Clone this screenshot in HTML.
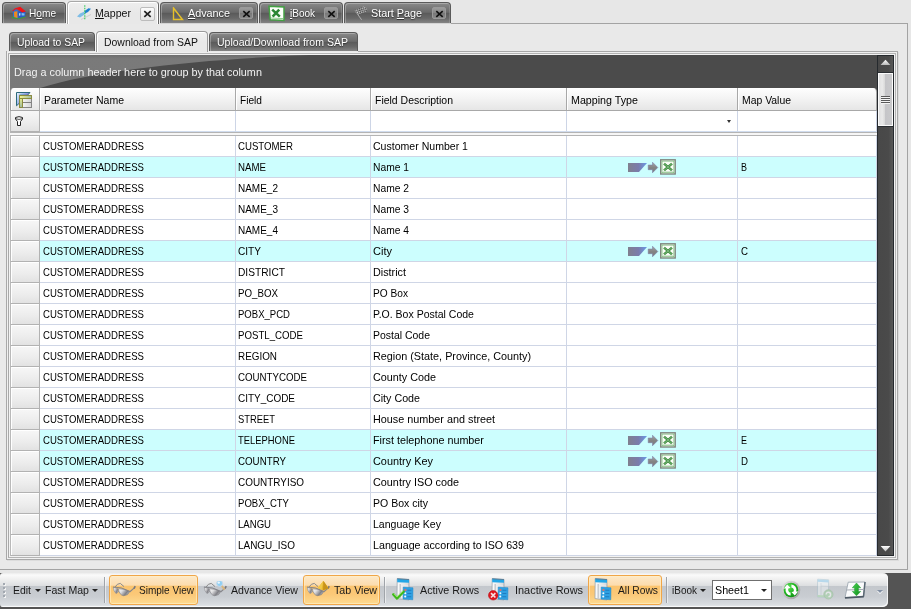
<!DOCTYPE html>
<html>
<head>
<meta charset="utf-8">
<title>Mapper</title>
<style>
*{box-sizing:border-box;margin:0;padding:0}
html,body{width:911px;height:609px;overflow:hidden}
body{background:#e7e7e7;font-family:"Liberation Sans",sans-serif;font-size:11px;color:#000;position:relative}
.abs{position:absolute}
.t{position:absolute;white-space:nowrap;line-height:13px;height:13px;transform-origin:0 50%}
/* ---------- top tabs ---------- */
.tab{position:absolute;top:2px;height:21px;border:1px solid #5a5a5a;border-bottom:none;border-radius:4px 4px 0 0;
 background:linear-gradient(#8a8a8a 0,#7a7a7a 22%,#6b6b6b 46%,#5b5b5b 52%,#686868 76%,#848484 100%);
 box-shadow:inset 1px 1px 0 rgba(255,255,255,.28), inset -1px 0 0 rgba(255,255,255,.15), 0 1px 0 #d4d4d4}
.tab.act{top:1px;height:23px;background:linear-gradient(#eeeeee,#e8e8e8 50%);border-color:#a8a8a8;border-right-color:#666;box-shadow:inset 1px 1px 0 #fff,inset -1px 0 0 #fff,-1px 0 0 #f8f8f8,1px 0 0 #f0f0f0}
.tab .t{color:#fff;text-shadow:0 1px 1px #333}
.tab.act .t{color:#111;text-shadow:none}
.cls{position:absolute;top:4px;width:14px;height:12px;border:1px solid #9a9a9a;border-radius:2px;
 background:linear-gradient(#9c9c9c,#858585 50%,#787878 55%,#8a8a8a)}
.tab.act .cls{background:linear-gradient(#fbfbfb,#e4e4e4);border-color:#bcbcbc;top:5px;box-shadow:none;width:15px;height:14px}
.cls svg{position:absolute;left:2px;top:2px}
/* second-level tabs */
.tab2{position:absolute;top:32px;height:19px;border:1px solid #5a5a5a;border-bottom:none;border-radius:4px 4px 0 0;
 background:linear-gradient(#8a8a8a 0,#7a7a7a 22%,#6b6b6b 46%,#5b5b5b 52%,#686868 76%,#848484 100%);
 box-shadow:inset 1px 1px 0 rgba(255,255,255,.28)}
.tab2 .t{color:#fff;text-shadow:0 1px 1px #333}
.tab2.act{top:31px;height:21px;background:linear-gradient(#f0f0f0,#e9e9e9 50%);border-color:#9a9a9a;box-shadow:inset 1px 1px 0 #fff,-1px 0 0 #f8f8f8,1px 0 0 #f0f0f0}
.tab2.act .t{color:#111;text-shadow:none}
/* ---------- frames ---------- */
#outer{position:absolute;left:-1px;top:23px;width:909px;height:547px;border:1px solid #a3a3a3;background:#e9e9e9}
#inner{position:absolute;left:6px;top:51px;width:892px;height:509px;border:1px solid #a8a8a8;background:#f0f0f0;box-shadow:1px 1px 0 #dcdcdc}
#inner2{position:absolute;left:8px;top:53px;width:888px;height:505px;border:1px solid #b4b4b4;background:#f2f2f2;border-left-color:#a8a8a8}
/* ---------- grid ---------- */
#grp{position:absolute;left:10px;top:55px;width:867px;height:33px;background:#4b4b4b;overflow:hidden}
#grid{position:absolute;left:10px;top:88px;width:867px;height:468px;background:#fff;overflow:hidden}
.hdr{position:absolute;top:0;height:23px;background:linear-gradient(#fefefe,#f4f4f4 45%,#e6e6e6);border-right:1px solid #a8a8a8;border-bottom:1px solid #a8a8a8;box-shadow:inset 1px 1px 0 #fff}
.flt{position:absolute;top:23px;height:21px;background:#fff;border-right:1px solid #cdd5e6;border-bottom:1px solid #d0dcee}
.ind{position:absolute;left:0;width:30px;height:21px;background:linear-gradient(#f7f7f7,#ececec 60%,#e2e2e2);border:1px solid #b2b2b2;border-top:none;border-left-color:#b9b9b9}
.row{position:absolute;left:30px;width:837px;height:21px;border-bottom:1px solid #cfd6e6;background:#fff}
.row.hl{background:#ccfefe}
.vl{position:absolute;top:48px;bottom:0;width:1px;background:#cfd6e6}
.c{position:absolute;top:4px;white-space:nowrap;line-height:13px;transform-origin:0 50%}
/* scrollbar */
#sb{position:absolute;left:877px;top:55px;width:17px;height:501px;background:linear-gradient(90deg,#484848 0,#4a4a4a 70%,#585858 100%);border:1px solid #262a2e}
#thumb{position:absolute;left:0;top:17px;width:15px;height:53px;border:1px solid #fbfbfb;
 background:linear-gradient(90deg,#e0e0e0 0,#e9e9e9 25%,#dadada 44%,#c5c5c8 48%,#c9c9cb 100%);box-shadow:0 -1px 0 #2a2e32,0 1px 0 #2a2e32}
/* ---------- toolbar ---------- */
#tbbg{position:absolute;left:0;top:573px;width:911px;height:36px;background:#545454}
#tb{position:absolute;left:0;top:573px;width:888px;height:34px;border-radius:3px 5px 5px 3px;box-shadow:inset -1px -1px 0 rgba(255,255,255,.75);
 background:linear-gradient(#ececec 0,#fafafa 6%,#f0f0f0 18%,#dddfe1 37%,#c3c7cc 39%,#c9cdd2 70%,#d8dce0 92%,#e6e9ec 100%)}
.btn{position:absolute;top:575px;height:30px;border:1px solid #f0a648;border-radius:3px;
 background:linear-gradient(#fde9c8 0,#fcdcae 33%,#fbc46e 36%,#fbc878 65%,#fdda90 100%);box-shadow:inset 0 0 0 1px rgba(255,240,200,.6)}
.sep{position:absolute;top:577px;width:1px;height:26px;background:#a0a4a9;box-shadow:1px 0 0 rgba(255,255,255,.55)}
.tt{position:absolute;top:584px;white-space:nowrap;line-height:13px;color:#1a1a1a;transform-origin:0 50%}
.dd{position:absolute;width:0;height:0;border-left:3px solid transparent;border-right:3px solid transparent;border-top:3px solid #222}
</style>
</head>
<body>
<div id="outer"></div><div id="inner"></div><div id="inner2"></div>
<div class="abs" style="left:0;top:23px;width:451px;height:1px;background:#e8e8e8"></div><div class="abs" style="left:7px;top:51px;width:351px;height:1px;background:#e9e9e9"></div>
<div class="tab" style="left:2px;width:64px"><svg class="abs" style="left:8px;top:3px" width="16" height="14" viewBox="0 0 16 14"><path d="M0.8 10.4 L7 12.4 L14.6 10 L14.3 11.6 L7 13.2 L1 12 Z" fill="#3aa62e"/><path d="M1.6 5 L4.4 2.4 L7 4.5 L7.3 12.2 L2.2 11 Z" fill="#2f6fd0"/><path d="M7 4.5 L14.6 5.8 L14.2 10.6 L7.3 12.2 Z" fill="#2a5ec4"/><path d="M10.6 7 L13.6 7.4 L13.4 9.4 L10.6 9.4Z" fill="#7cbcf2"/><path d="M8 7.2 L9.4 7 L9.4 9.6 L8 9.8Z" fill="#b8d8f4"/><path d="M3 5.8 L6.3 5.3 L6.4 11.9 L3.2 11.1 Z" fill="#ee8a1e"/><path d="M4.2 2.2 L9.2 0.8 L15 5.4 L11.2 6.6 L6.6 3.6 L4.6 3.2 L2 5.4 L1.2 4.8 Z" fill="#f01418"/></svg><span class="t" style="left:26px;top:4px;transform:scaleX(0.920);">H<u>o</u>me</span></div>
<div class="tab act" style="left:67px;width:92px"><svg class="abs" style="left:9px;top:3px" width="15" height="17" viewBox="0 0 15 17"><path d="M4 14.5 L14 9.5" stroke="#cfcfcf" stroke-width="1"/><path d="M0 11.5 L3 8.5 L7.5 6.5 L7.5 9.5 L3 12.5 Z" fill="#7dbce6"/><path d="M7.5 6 L11.5 3.3 L14 3.8 L11 7 L8 8.6 Z" fill="#1f7fd0"/><path d="M7.8 0.3 L7.8 15" stroke="#2ecc55" stroke-width="1.1" stroke-dasharray="1.5 1"/></svg><span class="t" style="left:27px;top:5px;transform:scaleX(0.965);"><u>M</u>apper</span><div class="cls" style="left:72px"><svg width="9" height="8" viewBox="0 0 9 8"><path d="M1.3 1.2 L7.7 6.8 M7.7 1.2 L1.3 6.8" stroke="#222" stroke-width="1.7" fill="none"/></svg></div></div>
<div class="tab" style="left:160px;width:98px"><svg class="abs" style="left:11px;top:4px" width="12" height="14" viewBox="0 0 12 14"><path d="M1.5 1 L10.5 12.5 L1.5 12.5 Z" fill="none" stroke="#e6c02a" stroke-width="1.4"/></svg><span class="t" style="left:27px;top:4px;transform:scaleX(0.981);"><u>A</u>dvance</span><div class="cls" style="left:78px"><svg width="9" height="8" viewBox="0 0 9 8"><path d="M1.3 1.2 L7.7 6.8 M7.7 1.2 L1.3 6.8" stroke="#111" stroke-width="1.7" fill="none"/></svg></div></div>
<div class="tab" style="left:259px;width:84px"><svg class="abs" style="left:8px;top:2px" width="17" height="17" viewBox="0 0 17 17"><path d="M1 1.2 L16 2 L16 15.5 L2.2 14.8 Z" fill="#fcfffa" stroke="#43a043" stroke-width="1.5"/><path d="M4.2 4.6 L11.8 11.6 M11.2 4.6 L4.6 11.6" stroke="#2b8734" stroke-width="2.6"/><path d="M3 13 L15 13.6" stroke="#8cc88c" stroke-width="1"/></svg><span class="t" style="left:30px;top:4px;transform:scaleX(0.908);"><u>i</u>Book</span><div class="cls" style="left:64px"><svg width="9" height="8" viewBox="0 0 9 8"><path d="M1.3 1.2 L7.7 6.8 M7.7 1.2 L1.3 6.8" stroke="#111" stroke-width="1.7" fill="none"/></svg></div></div>
<div class="tab" style="left:344px;width:107px"><svg class="abs" style="left:9px;top:2px" width="15" height="16" viewBox="0 0 15 16"><defs><pattern id="ck" width="2.6" height="2.6" patternUnits="userSpaceOnUse" patternTransform="rotate(-28)"><rect width="2.6" height="2.6" fill="#e4e4e4"/><rect width="1.3" height="1.3" fill="#2c2c2c"/><rect x="1.3" y="1.3" width="1.3" height="1.3" fill="#2c2c2c"/></pattern></defs><path d="M2 7 L7.6 14.8" stroke="#b4b4b4" stroke-width=".9"/><path d="M0.5 5.4 Q3 2.8 5.5 3.6 Q8 2.6 10 0.8 L14 4.6 Q12 7.4 9.6 7.6 Q7 8.2 4.2 10.6 Z" fill="url(#ck)" opacity=".9"/></svg><span class="t" style="left:26px;top:4px;transform:scaleX(0.981);">Start <u>P</u>age</span><div class="cls" style="left:87px"><svg width="9" height="8" viewBox="0 0 9 8"><path d="M1.3 1.2 L7.7 6.8 M7.7 1.2 L1.3 6.8" stroke="#111" stroke-width="1.7" fill="none"/></svg></div></div>
<div class="tab2" style="left:9px;width:86px"><span class="t" style="left:7px;top:3px;transform:scaleX(0.942);">Upload to SAP</span></div>
<div class="tab2 act" style="left:96px;width:112px"><span class="t" style="left:7px;top:4px;transform:scaleX(0.949);">Download from SAP</span></div>
<div class="tab2" style="left:209px;width:149px"><span class="t" style="left:7px;top:3px;transform:scaleX(0.956);">Upload/Download from SAP</span></div>
<div id="grp"><svg class="abs" style="left:0;top:0" width="867" height="33" viewBox="0 0 867 33"><defs><linearGradient id="gg" x1="0" y1="0" x2="0" y2="1"><stop offset="0" stop-color="#6e6e6e"/><stop offset=".12" stop-color="#7a7a7a"/><stop offset="1" stop-color="#797979"/></linearGradient></defs><path d="M0 0 L300 0 C200 4 90 14 30 33 L0 33 Z" fill="url(#gg)"/></svg><span class="t" style="left:4px;top:11px;transform:scaleX(0.984);color:#f2f2f2">Drag a column header here to group by that column</span></div>
<div id="grid"><div class="abs" style="left:0;top:0;width:6px;height:6px;background:#7a7a7a"></div><div class="abs" style="left:861px;top:0;width:6px;height:6px;background:#4b4b4b"></div><div class="hdr" style="left:0px;width:30px;border-radius:4px 0 0 0;border-left:1px solid #9a9a9a;"><svg class="abs" style="left:5px;top:4px" width="17" height="17" viewBox="0 0 17 17"><defs><linearGradient id="hb" x1="0" y1="0" x2="1" y2=".6"><stop offset="0" stop-color="#f4faff"/><stop offset=".35" stop-color="#a8c4f0"/><stop offset=".7" stop-color="#8a86dc"/></linearGradient><linearGradient id="hy" x1="0" x2="1"><stop offset="0" stop-color="#f0f48c"/><stop offset="1" stop-color="#a4bca4"/></linearGradient><linearGradient id="hy2" x1="0" y1="0" x2="0" y2="1"><stop offset="0" stop-color="#ecf08c"/><stop offset="1" stop-color="#a0b8a0"/></linearGradient><linearGradient id="hw" x1="0" x2="1"><stop offset="0" stop-color="#fff"/><stop offset="1" stop-color="#d4d4d4"/></linearGradient></defs><path d="M0.5 0.5 L14 0.5 L11.5 3.2 L3.5 3.2 L3.5 11 L0.5 13.8 Z" fill="url(#hb)" stroke="#2e6a7a" stroke-width="1"/><rect x="3.5" y="3.5" width="12" height="12" fill="url(#hw)" stroke="#858585" stroke-width="1"/><rect x="4" y="4" width="11" height="2" fill="url(#hy)"/><rect x="4" y="6" width="2" height="9" fill="url(#hy2)"/><path d="M3.5 16 L3.5 3.5 L15.5 3.5 L15.5 7 M4 6.5 L15.5 6.5 M6.5 6.5 L6.5 15.5 M3.5 15.5 L6.5 15.5" fill="none" stroke="#8c8c3c" stroke-width="1"/><path d="M7 10.5 L15 10.5" stroke="#808080" stroke-width="1"/></svg></div><div class="hdr" style="left:30px;width:196px;"><span class="t" style="left:4px;top:6px;transform:scaleX(0.955);">Parameter Name</span></div><div class="hdr" style="left:226px;width:135px;"><span class="t" style="left:4px;top:6px;transform:scaleX(0.923);">Field</span></div><div class="hdr" style="left:361px;width:196px;"><span class="t" style="left:4px;top:6px;transform:scaleX(0.952);">Field Description</span></div><div class="hdr" style="left:557px;width:171px;"><span class="t" style="left:4px;top:6px;transform:scaleX(0.972);">Mapping Type</span></div><div class="hdr" style="left:728px;width:139px;border-radius:0 4px 0 0;"><span class="t" style="left:4px;top:6px;transform:scaleX(0.946);">Map Value</span></div><div class="ind" style="top:23px;height:21px"><svg class="abs" style="left:4px;top:5px" width="8" height="10" viewBox="0 0 8 10"><path d="M0.5 1.5 Q4 -0.2 7.5 1.5 L7.5 3 L5.5 5.5 L5.5 9.5 L2.5 9.5 L2.5 5.5 L0.5 3 Z" fill="#fdfdfd" stroke="#222" stroke-width="1"/><path d="M1 2.8 Q4 4 7 2.8" fill="none" stroke="#222" stroke-width=".8"/></svg></div><div class="flt" style="left:30px;width:196px"></div><div class="flt" style="left:226px;width:135px"></div><div class="flt" style="left:361px;width:196px"></div><div class="flt" style="left:557px;width:171px"><div class="dd" style="left:160px;top:9px;border-top-color:#333;border-left-width:2.5px;border-right-width:2.5px"></div></div><div class="flt" style="left:728px;width:139px"></div><div class="abs" style="left:0;top:44px;width:867px;height:4px;background:#f6f6f6;border-top:1px solid #b4b4b4;border-bottom:1px solid #b4b4b4"></div><div class="ind" style="top:48px;box-shadow:inset 1px 1px 0 #fff"></div><div class="row" style="top:48px"><span class="c" style="left:3px;top:4px;transform:scaleX(0.871);">CUSTOMERADDRESS</span><span class="c" style="left:198px;top:4px;transform:scaleX(0.876);">CUSTOMER</span><span class="c" style="left:333px;top:4px;transform:scaleX(0.959);">Customer Number 1</span></div><div class="ind" style="top:69px;box-shadow:inset 1px 1px 0 #fff"></div><div class="row hl" style="top:69px"><span class="c" style="left:3px;top:4px;transform:scaleX(0.871);">CUSTOMERADDRESS</span><span class="c" style="left:198px;top:4px;transform:scaleX(0.881);">NAME</span><span class="c" style="left:333px;top:4px;transform:scaleX(0.934);">Name 1</span><svg class="abs" style="left:588px;top:2px" width="50" height="17" viewBox="0 0 50 17"><defs><linearGradient id="mg" x1="0" x2="1"><stop offset="0" stop-color="#80808e"/><stop offset=".55" stop-color="#7a7cac"/><stop offset="1" stop-color="#6a9ae6"/></linearGradient><linearGradient id="ma" x1="0" y1="0" x2="0" y2="1"><stop offset="0" stop-color="#a6a6a6"/><stop offset=".5" stop-color="#848484"/><stop offset="1" stop-color="#7c7c7c"/></linearGradient></defs><path d="M0 4.1 L19 4.1 L11 12.9 L0 12.9 Z" fill="url(#mg)"/><path d="M20.2 6 L24.5 6 L24.5 3.2 L29.8 8.5 L24.5 13.8 L24.5 10.7 L20.2 10.7 Z" fill="url(#ma)" stroke="#7474a4" stroke-width=".5"/><rect x="32.7" y="0.8" width="14.5" height="14.2" fill="#fbfdf8" stroke="#7e867e" stroke-width="1.4"/><rect x="34" y="2.1" width="11.9" height="11.6" fill="none" stroke="#78b878" stroke-width=".8"/><path d="M36 4.6 L44 11.4 M44 4.6 L36 11.4" stroke="#3a8a3a" stroke-width="2.5"/><path d="M36 4.6 L44 11.4 M44 4.6 L36 11.4" stroke="#a4d4a4" stroke-width=".6"/><path d="M35 12.6 L45 12.6" stroke="#c4dcc4" stroke-width=".8"/></svg><span class="c" style="left:701px;top:4px;transform:scaleX(0.817);">B</span></div><div class="ind" style="top:90px;box-shadow:inset 1px 1px 0 #fff"></div><div class="row" style="top:90px"><span class="c" style="left:3px;top:4px;transform:scaleX(0.871);">CUSTOMERADDRESS</span><span class="c" style="left:198px;top:4px;transform:scaleX(0.908);">NAME_2</span><span class="c" style="left:333px;top:4px;transform:scaleX(0.934);">Name 2</span></div><div class="ind" style="top:111px;box-shadow:inset 1px 1px 0 #fff"></div><div class="row" style="top:111px"><span class="c" style="left:3px;top:4px;transform:scaleX(0.871);">CUSTOMERADDRESS</span><span class="c" style="left:198px;top:4px;transform:scaleX(0.908);">NAME_3</span><span class="c" style="left:333px;top:4px;transform:scaleX(0.934);">Name 3</span></div><div class="ind" style="top:132px;box-shadow:inset 1px 1px 0 #fff"></div><div class="row" style="top:132px"><span class="c" style="left:3px;top:4px;transform:scaleX(0.871);">CUSTOMERADDRESS</span><span class="c" style="left:198px;top:4px;transform:scaleX(0.908);">NAME_4</span><span class="c" style="left:333px;top:4px;transform:scaleX(0.934);">Name 4</span></div><div class="ind" style="top:153px;box-shadow:inset 1px 1px 0 #fff"></div><div class="row hl" style="top:153px"><span class="c" style="left:3px;top:4px;transform:scaleX(0.871);">CUSTOMERADDRESS</span><span class="c" style="left:198px;top:4px;transform:scaleX(0.918);">CITY</span><span class="c" style="left:333px;top:4px;transform:scaleX(1.002);">City</span><svg class="abs" style="left:588px;top:2px" width="50" height="17" viewBox="0 0 50 17"><defs><linearGradient id="mg" x1="0" x2="1"><stop offset="0" stop-color="#80808e"/><stop offset=".55" stop-color="#7a7cac"/><stop offset="1" stop-color="#6a9ae6"/></linearGradient><linearGradient id="ma" x1="0" y1="0" x2="0" y2="1"><stop offset="0" stop-color="#a6a6a6"/><stop offset=".5" stop-color="#848484"/><stop offset="1" stop-color="#7c7c7c"/></linearGradient></defs><path d="M0 4.1 L19 4.1 L11 12.9 L0 12.9 Z" fill="url(#mg)"/><path d="M20.2 6 L24.5 6 L24.5 3.2 L29.8 8.5 L24.5 13.8 L24.5 10.7 L20.2 10.7 Z" fill="url(#ma)" stroke="#7474a4" stroke-width=".5"/><rect x="32.7" y="0.8" width="14.5" height="14.2" fill="#fbfdf8" stroke="#7e867e" stroke-width="1.4"/><rect x="34" y="2.1" width="11.9" height="11.6" fill="none" stroke="#78b878" stroke-width=".8"/><path d="M36 4.6 L44 11.4 M44 4.6 L36 11.4" stroke="#3a8a3a" stroke-width="2.5"/><path d="M36 4.6 L44 11.4 M44 4.6 L36 11.4" stroke="#a4d4a4" stroke-width=".6"/><path d="M35 12.6 L45 12.6" stroke="#c4dcc4" stroke-width=".8"/></svg><span class="c" style="left:701px;top:4px;transform:scaleX(0.880);">C</span></div><div class="ind" style="top:174px;box-shadow:inset 1px 1px 0 #fff"></div><div class="row" style="top:174px"><span class="c" style="left:3px;top:4px;transform:scaleX(0.871);">CUSTOMERADDRESS</span><span class="c" style="left:198px;top:4px;transform:scaleX(0.926);">DISTRICT</span><span class="c" style="left:333px;top:4px;transform:scaleX(0.982);">District</span></div><div class="ind" style="top:195px;box-shadow:inset 1px 1px 0 #fff"></div><div class="row" style="top:195px"><span class="c" style="left:3px;top:4px;transform:scaleX(0.871);">CUSTOMERADDRESS</span><span class="c" style="left:198px;top:4px;transform:scaleX(0.884);">PO_BOX</span><span class="c" style="left:333px;top:4px;transform:scaleX(0.923);">PO Box</span></div><div class="ind" style="top:216px;box-shadow:inset 1px 1px 0 #fff"></div><div class="row" style="top:216px"><span class="c" style="left:3px;top:4px;transform:scaleX(0.871);">CUSTOMERADDRESS</span><span class="c" style="left:198px;top:4px;transform:scaleX(0.868);">POBX_PCD</span><span class="c" style="left:333px;top:4px;transform:scaleX(0.956);">P.O. Box Postal Code</span></div><div class="ind" style="top:237px;box-shadow:inset 1px 1px 0 #fff"></div><div class="row" style="top:237px"><span class="c" style="left:3px;top:4px;transform:scaleX(0.871);">CUSTOMERADDRESS</span><span class="c" style="left:198px;top:4px;transform:scaleX(0.879);">POSTL_CODE</span><span class="c" style="left:333px;top:4px;transform:scaleX(0.951);">Postal Code</span></div><div class="ind" style="top:258px;box-shadow:inset 1px 1px 0 #fff"></div><div class="row" style="top:258px"><span class="c" style="left:3px;top:4px;transform:scaleX(0.871);">CUSTOMERADDRESS</span><span class="c" style="left:198px;top:4px;transform:scaleX(0.898);">REGION</span><span class="c" style="left:333px;top:4px;transform:scaleX(0.983);">Region (State, Province, County)</span></div><div class="ind" style="top:279px;box-shadow:inset 1px 1px 0 #fff"></div><div class="row" style="top:279px"><span class="c" style="left:3px;top:4px;transform:scaleX(0.871);">CUSTOMERADDRESS</span><span class="c" style="left:198px;top:4px;transform:scaleX(0.882);">COUNTYCODE</span><span class="c" style="left:333px;top:4px;transform:scaleX(0.981);">County Code</span></div><div class="ind" style="top:300px;box-shadow:inset 1px 1px 0 #fff"></div><div class="row" style="top:300px"><span class="c" style="left:3px;top:4px;transform:scaleX(0.871);">CUSTOMERADDRESS</span><span class="c" style="left:198px;top:4px;transform:scaleX(0.905);">CITY_CODE</span><span class="c" style="left:333px;top:4px;transform:scaleX(0.973);">City Code</span></div><div class="ind" style="top:321px;box-shadow:inset 1px 1px 0 #fff"></div><div class="row" style="top:321px"><span class="c" style="left:3px;top:4px;transform:scaleX(0.871);">CUSTOMERADDRESS</span><span class="c" style="left:198px;top:4px;transform:scaleX(0.852);">STREET</span><span class="c" style="left:333px;top:4px;transform:scaleX(0.983);">House number and street</span></div><div class="ind" style="top:342px;box-shadow:inset 1px 1px 0 #fff"></div><div class="row hl" style="top:342px"><span class="c" style="left:3px;top:4px;transform:scaleX(0.871);">CUSTOMERADDRESS</span><span class="c" style="left:198px;top:4px;transform:scaleX(0.855);">TELEPHONE</span><span class="c" style="left:333px;top:4px;transform:scaleX(0.981);">First telephone number</span><svg class="abs" style="left:588px;top:2px" width="50" height="17" viewBox="0 0 50 17"><defs><linearGradient id="mg" x1="0" x2="1"><stop offset="0" stop-color="#80808e"/><stop offset=".55" stop-color="#7a7cac"/><stop offset="1" stop-color="#6a9ae6"/></linearGradient><linearGradient id="ma" x1="0" y1="0" x2="0" y2="1"><stop offset="0" stop-color="#a6a6a6"/><stop offset=".5" stop-color="#848484"/><stop offset="1" stop-color="#7c7c7c"/></linearGradient></defs><path d="M0 4.1 L19 4.1 L11 12.9 L0 12.9 Z" fill="url(#mg)"/><path d="M20.2 6 L24.5 6 L24.5 3.2 L29.8 8.5 L24.5 13.8 L24.5 10.7 L20.2 10.7 Z" fill="url(#ma)" stroke="#7474a4" stroke-width=".5"/><rect x="32.7" y="0.8" width="14.5" height="14.2" fill="#fbfdf8" stroke="#7e867e" stroke-width="1.4"/><rect x="34" y="2.1" width="11.9" height="11.6" fill="none" stroke="#78b878" stroke-width=".8"/><path d="M36 4.6 L44 11.4 M44 4.6 L36 11.4" stroke="#3a8a3a" stroke-width="2.5"/><path d="M36 4.6 L44 11.4 M44 4.6 L36 11.4" stroke="#a4d4a4" stroke-width=".6"/><path d="M35 12.6 L45 12.6" stroke="#c4dcc4" stroke-width=".8"/></svg><span class="c" style="left:701px;top:4px;transform:scaleX(0.817);">E</span></div><div class="ind" style="top:363px;box-shadow:inset 1px 1px 0 #fff"></div><div class="row hl" style="top:363px"><span class="c" style="left:3px;top:4px;transform:scaleX(0.871);">CUSTOMERADDRESS</span><span class="c" style="left:198px;top:4px;transform:scaleX(0.886);">COUNTRY</span><span class="c" style="left:333px;top:4px;transform:scaleX(0.991);">Country Key</span><svg class="abs" style="left:588px;top:2px" width="50" height="17" viewBox="0 0 50 17"><defs><linearGradient id="mg" x1="0" x2="1"><stop offset="0" stop-color="#80808e"/><stop offset=".55" stop-color="#7a7cac"/><stop offset="1" stop-color="#6a9ae6"/></linearGradient><linearGradient id="ma" x1="0" y1="0" x2="0" y2="1"><stop offset="0" stop-color="#a6a6a6"/><stop offset=".5" stop-color="#848484"/><stop offset="1" stop-color="#7c7c7c"/></linearGradient></defs><path d="M0 4.1 L19 4.1 L11 12.9 L0 12.9 Z" fill="url(#mg)"/><path d="M20.2 6 L24.5 6 L24.5 3.2 L29.8 8.5 L24.5 13.8 L24.5 10.7 L20.2 10.7 Z" fill="url(#ma)" stroke="#7474a4" stroke-width=".5"/><rect x="32.7" y="0.8" width="14.5" height="14.2" fill="#fbfdf8" stroke="#7e867e" stroke-width="1.4"/><rect x="34" y="2.1" width="11.9" height="11.6" fill="none" stroke="#78b878" stroke-width=".8"/><path d="M36 4.6 L44 11.4 M44 4.6 L36 11.4" stroke="#3a8a3a" stroke-width="2.5"/><path d="M36 4.6 L44 11.4 M44 4.6 L36 11.4" stroke="#a4d4a4" stroke-width=".6"/><path d="M35 12.6 L45 12.6" stroke="#c4dcc4" stroke-width=".8"/></svg><span class="c" style="left:701px;top:4px;transform:scaleX(0.880);">D</span></div><div class="ind" style="top:384px;box-shadow:inset 1px 1px 0 #fff"></div><div class="row" style="top:384px"><span class="c" style="left:3px;top:4px;transform:scaleX(0.871);">CUSTOMERADDRESS</span><span class="c" style="left:198px;top:4px;transform:scaleX(0.902);">COUNTRYISO</span><span class="c" style="left:333px;top:4px;transform:scaleX(0.984);">Country ISO code</span></div><div class="ind" style="top:405px;box-shadow:inset 1px 1px 0 #fff"></div><div class="row" style="top:405px"><span class="c" style="left:3px;top:4px;transform:scaleX(0.871);">CUSTOMERADDRESS</span><span class="c" style="left:198px;top:4px;transform:scaleX(0.869);">POBX_CTY</span><span class="c" style="left:333px;top:4px;transform:scaleX(0.957);">PO Box city</span></div><div class="ind" style="top:426px;box-shadow:inset 1px 1px 0 #fff"></div><div class="row" style="top:426px"><span class="c" style="left:3px;top:4px;transform:scaleX(0.871);">CUSTOMERADDRESS</span><span class="c" style="left:198px;top:4px;transform:scaleX(0.871);">LANGU</span><span class="c" style="left:333px;top:4px;transform:scaleX(0.958);">Language Key</span></div><div class="ind" style="top:447px;box-shadow:inset 1px 1px 0 #fff"></div><div class="row" style="top:447px"><span class="c" style="left:3px;top:4px;transform:scaleX(0.871);">CUSTOMERADDRESS</span><span class="c" style="left:198px;top:4px;transform:scaleX(0.905);">LANGU_ISO</span><span class="c" style="left:333px;top:4px;transform:scaleX(0.972);">Language according to ISO 639</span></div><div class="vl" style="left:225px"></div><div class="vl" style="left:360px"></div><div class="vl" style="left:556px"></div><div class="vl" style="left:727px"></div><div class="vl" style="left:866px"></div></div>
<div id="sb"><svg class="abs" style="left:2px;top:3px" width="11" height="7" viewBox="0 0 11 7"><defs><linearGradient id="ag" x1="0" y1="0" x2="0" y2="1"><stop offset="0" stop-color="#fff"/><stop offset="1" stop-color="#b8b8b8"/></linearGradient></defs><path d="M5.5 0.8 L10.4 6 L0.6 6 Z" fill="url(#ag)"/></svg><div id="thumb"><div class="abs" style="left:2px;top:22px;width:9px;height:1px;background:#5a5a5a;box-shadow:0 2px 0 #5a5a5a,0 4px 0 #5a5a5a,0 6px 0 #5a5a5a,0 1px 0 #f4f4f4,0 3px 0 #f4f4f4,0 5px 0 #f4f4f4,0 7px 0 #f4f4f4"></div></div><svg class="abs" style="left:2px;top:489px" width="11" height="7" viewBox="0 0 11 7"><defs><linearGradient id="ag2" x1="0" y1="0" x2="0" y2="1"><stop offset="0" stop-color="#fff"/><stop offset="1" stop-color="#b8b8b8"/></linearGradient></defs><path d="M0.6 1 L10.4 1 L5.5 6.6 Z" fill="url(#ag2)"/></svg></div>
<div id="tbbg"></div><div id="tb"></div>
<div class="abs" style="left:3px;top:583px;width:2px;height:2px;background:#a2a8b0;box-shadow:0 4px 0 #a2a8b0,0 8px 0 #a2a8b0,0 12px 0 #a2a8b0,1px 1px 0 #f4f4f4,1px 5px 0 #f4f4f4,1px 9px 0 #f4f4f4,1px 13px 0 #f4f4f4"></div>
<span class="tt" style="left:13px;top:584px;transform:scaleX(0.949);">Edit</span>
<div class="dd" style="left:35px;top:589px"></div>
<span class="tt" style="left:45px;top:584px;transform:scaleX(0.959);">Fast Map</span>
<div class="dd" style="left:92px;top:589px"></div>
<div class="sep" style="left:104px"></div>
<div class="btn" style="left:109px;width:89px"></div>
<svg class="abs" style="left:112px;top:581px" width="26" height="18" viewBox="0 0 26 18"><defs><linearGradient id="gl1" x1="0" y1="0" x2="1" y2=".5"><stop offset="0" stop-color="#ffffff"/><stop offset=".4" stop-color="#dcdcde"/><stop offset=".8" stop-color="#808086"/><stop offset="1" stop-color="#b4b4b8"/></linearGradient></defs><path d="M3 6.2 Q5 2.4 8.3 2.4 L12 5.6" fill="none" stroke="#8a8a8a" stroke-width="1"/><path d="M1.2 6.4 L5.6 7.4 L6.4 11 L4 12.6 Q1.6 10 1.2 6.4Z" fill="url(#gl1)" stroke="#8a8a8e" stroke-width=".6"/><path d="M6.4 7.8 Q12 7.2 17.6 10.6 Q16.4 14.6 11.6 14.7 Q7.4 14.2 6.4 7.8Z" fill="url(#gl1)" stroke="#77777c" stroke-width=".6"/><path d="M1 6 Q9 5.6 18 10.4" fill="none" stroke="#808086" stroke-width=".9"/><path d="M17.6 11 L22.6 6.6" stroke="#84848a" stroke-width="1.1"/><path d="M22 7.6 L23.2 5.2" stroke="#77777c" stroke-width="1.6"/></svg>
<span class="tt" style="left:139px;top:584px;transform:scaleX(0.912);">Simple View</span>
<svg class="abs" style="left:203px;top:581px" width="26" height="18" viewBox="0 0 26 18"><defs><linearGradient id="gl2" x1="0" y1="0" x2="1" y2=".5"><stop offset="0" stop-color="#ffffff"/><stop offset=".4" stop-color="#dcdcde"/><stop offset=".8" stop-color="#808086"/><stop offset="1" stop-color="#b4b4b8"/></linearGradient></defs><path d="M3 6.2 Q5 2.4 8.3 2.4 L12 5.6" fill="none" stroke="#8a8a8a" stroke-width="1"/><path d="M1.2 6.4 L5.6 7.4 L6.4 11 L4 12.6 Q1.6 10 1.2 6.4Z" fill="url(#gl2)" stroke="#8a8a8e" stroke-width=".6"/><path d="M6.4 7.8 Q12 7.2 17.6 10.6 Q16.4 14.6 11.6 14.7 Q7.4 14.2 6.4 7.8Z" fill="url(#gl2)" stroke="#77777c" stroke-width=".6"/><path d="M1 6 Q9 5.6 18 10.4" fill="none" stroke="#808086" stroke-width=".9"/><path d="M17.6 11 L22.6 6.6" stroke="#84848a" stroke-width="1.1"/><path d="M22 7.6 L23.2 5.2" stroke="#77777c" stroke-width="1.6"/><path d="M18.5 4.5 L21.6 8.6" stroke="#d9b67c" stroke-width="1.8"/><circle cx="16.6" cy="2.4" r="3" fill="#8fd0f4" stroke="#c8d8e8" stroke-width=".9"/><circle cx="15.8" cy="1.6" r="1.2" fill="#e8f6ff"/></svg>
<span class="tt" style="left:231px;top:584px;transform:scaleX(0.964);">Advance View</span>
<div class="btn" style="left:303px;width:77px"></div>
<svg class="abs" style="left:306px;top:581px" width="26" height="18" viewBox="0 0 26 18"><defs><linearGradient id="gl3" x1="0" y1="0" x2="1" y2=".5"><stop offset="0" stop-color="#ffffff"/><stop offset=".4" stop-color="#dcdcde"/><stop offset=".8" stop-color="#808086"/><stop offset="1" stop-color="#b4b4b8"/></linearGradient></defs><path d="M3 6.2 Q5 2.4 8.3 2.4 L12 5.6" fill="none" stroke="#8a8a8a" stroke-width="1"/><path d="M1.2 6.4 L5.6 7.4 L6.4 11 L4 12.6 Q1.6 10 1.2 6.4Z" fill="url(#gl3)" stroke="#8a8a8e" stroke-width=".6"/><path d="M6.4 7.8 Q12 7.2 17.6 10.6 Q16.4 14.6 11.6 14.7 Q7.4 14.2 6.4 7.8Z" fill="url(#gl3)" stroke="#77777c" stroke-width=".6"/><path d="M1 6 Q9 5.6 18 10.4" fill="none" stroke="#808086" stroke-width=".9"/><path d="M17.6 11 L22.6 6.6" stroke="#84848a" stroke-width="1.1"/><path d="M22 7.6 L23.2 5.2" stroke="#77777c" stroke-width="1.6"/><path d="M12 7 L17.4 -0.2 L22.6 7.4 L17 9.2 Z" fill="#e6b428"/><path d="M17.4 -0.2 L22.6 7.4 L17 9.2Z" fill="#c8921a"/><path d="M12 7 L17.4 -0.2 L15.5 8.6Z" fill="#f0c848"/></svg>
<span class="tt" style="left:334px;top:584px;transform:scaleX(0.968);">Tab View</span>
<div class="sep" style="left:384px"></div>
<svg class="abs" style="left:392px;top:577px;opacity:1" width="24" height="24" viewBox="0 0 24 24"><defs><linearGradient id="dg" x1="0" x2="1"><stop offset="0" stop-color="#fdfdfd"/><stop offset="1" stop-color="#d4d8dc"/></linearGradient></defs><path d="M5.2 1.6 L17 2.4 L17 23 L5 21.6 Z" fill="url(#dg)" stroke="#9aa4ae" stroke-width=".8"/><path d="M5.2 1.8 L17 2.6 L17 5.8 L5.2 5.2Z" fill="#23a6e6"/><path d="M5.2 1.8 L17 2.6" stroke="#5a7a92" stroke-width=".9"/><path d="M8.2 7 L8.2 21.5" stroke="#c4c8cc" stroke-width="1.4"/><path d="M9.5 8.5 L16 8.8" stroke="#e8eaec" stroke-width="1"/><path d="M11.2 10 L21 10.8 L20.8 22.8 L11 22 Z" fill="#2fa0e2" stroke="#2586c4" stroke-width=".5"/><circle cx="13.4" cy="13" r="1.05" fill="#f06a5a"/><circle cx="13.3" cy="16.2" r="1" fill="#f4fbff"/><circle cx="13.2" cy="19.4" r="1" fill="#f4fbff"/><path d="M15.4 13.3h4M15.3 16.5h4M15.2 19.7h4" stroke="#1f7cc0" stroke-width="1.1"/><path d="M1.4 17.4 L5 21.4 L11.6 14.6" fill="none" stroke="#3fb81e" stroke-width="2.6" stroke-linecap="round" stroke-linejoin="round"/><path d="M2 17 L5 20 L11 14" fill="none" stroke="#9be86a" stroke-width=".9" stroke-linecap="round"/></svg>
<span class="tt" style="left:420px;top:584px;transform:scaleX(0.975);">Active Rows</span>
<svg class="abs" style="left:487px;top:577px;opacity:1" width="24" height="24" viewBox="0 0 24 24"><defs><linearGradient id="dg" x1="0" x2="1"><stop offset="0" stop-color="#fdfdfd"/><stop offset="1" stop-color="#d4d8dc"/></linearGradient></defs><path d="M5.2 1.6 L17 2.4 L17 23 L5 21.6 Z" fill="url(#dg)" stroke="#9aa4ae" stroke-width=".8"/><path d="M5.2 1.8 L17 2.6 L17 5.8 L5.2 5.2Z" fill="#23a6e6"/><path d="M5.2 1.8 L17 2.6" stroke="#5a7a92" stroke-width=".9"/><path d="M8.2 7 L8.2 21.5" stroke="#c4c8cc" stroke-width="1.4"/><path d="M9.5 8.5 L16 8.8" stroke="#e8eaec" stroke-width="1"/><path d="M11.2 10 L21 10.8 L20.8 22.8 L11 22 Z" fill="#2fa0e2" stroke="#2586c4" stroke-width=".5"/><circle cx="13.4" cy="13" r="1.05" fill="#f06a5a"/><circle cx="13.3" cy="16.2" r="1" fill="#f4fbff"/><circle cx="13.2" cy="19.4" r="1" fill="#f4fbff"/><path d="M15.4 13.3h4M15.3 16.5h4M15.2 19.7h4" stroke="#1f7cc0" stroke-width="1.1"/><circle cx="6.2" cy="18.3" r="4.7" fill="#e0161e" stroke="#b81018" stroke-width=".6"/><path d="M4 16.1 L8.4 20.5 M8.4 16.1 L4 20.5" stroke="#f4dede" stroke-width="1.7"/></svg>
<span class="tt" style="left:515px;top:584px;transform:scaleX(0.993);">Inactive Rows</span>
<div class="btn" style="left:588px;width:74px"></div>
<svg class="abs" style="left:590px;top:577px;opacity:1" width="24" height="24" viewBox="0 0 24 24"><defs><linearGradient id="dg" x1="0" x2="1"><stop offset="0" stop-color="#fdfdfd"/><stop offset="1" stop-color="#d4d8dc"/></linearGradient></defs><path d="M5.2 1.6 L17 2.4 L17 23 L5 21.6 Z" fill="url(#dg)" stroke="#9aa4ae" stroke-width=".8"/><path d="M5.2 1.8 L17 2.6 L17 5.8 L5.2 5.2Z" fill="#23a6e6"/><path d="M5.2 1.8 L17 2.6" stroke="#5a7a92" stroke-width=".9"/><path d="M8.2 7 L8.2 21.5" stroke="#c4c8cc" stroke-width="1.4"/><path d="M9.5 8.5 L16 8.8" stroke="#e8eaec" stroke-width="1"/><path d="M11.2 10 L21 10.8 L20.8 22.8 L11 22 Z" fill="#2fa0e2" stroke="#2586c4" stroke-width=".5"/><circle cx="13.4" cy="13" r="1.05" fill="#f06a5a"/><circle cx="13.3" cy="16.2" r="1" fill="#f4fbff"/><circle cx="13.2" cy="19.4" r="1" fill="#f4fbff"/><path d="M15.4 13.3h4M15.3 16.5h4M15.2 19.7h4" stroke="#1f7cc0" stroke-width="1.1"/></svg>
<span class="tt" style="left:618px;top:584px;transform:scaleX(0.935);">All Rows</span>
<div class="sep" style="left:666px"></div>
<span class="tt" style="left:672px;top:584px;transform:scaleX(0.908);">iBook</span>
<div class="dd" style="left:700px;top:589px"></div>
<div class="abs" style="left:712px;top:580px;width:60px;height:20px;background:#fff;border:1px solid #6f6f6f"></div>
<span class="tt" style="left:715px;top:584px;transform:scaleX(0.975);color:#000">Sheet1</span>
<div class="dd" style="left:761px;top:589px"></div>
<svg class="abs" style="left:781px;top:580px" width="20" height="20" viewBox="0 0 20 20"><defs><radialGradient id="rg" cx=".35" cy=".3" r=".8"><stop offset="0" stop-color="#5fe05a"/><stop offset=".55" stop-color="#1fb41f"/><stop offset="1" stop-color="#0c8c10"/></radialGradient><linearGradient id="rr" x1="0" y1="0" x2="1" y2="1"><stop offset="0" stop-color="#e4e4e4"/><stop offset="1" stop-color="#9c9c9c"/></linearGradient></defs><circle cx="10" cy="10" r="9.3" fill="url(#rr)"/><circle cx="10" cy="10" r="7.3" fill="url(#rg)"/><path d="M10.4 4.4 A5.6 5.6 0 0 1 15.2 11.6 L17.2 11.4 L13.8 15.6 L10.4 12 L12.4 11.8 A2.9 2.9 0 0 0 10.4 7.4 Z" fill="#fff"/><path d="M9.6 15.6 A5.6 5.6 0 0 1 4.8 8.4 L2.8 8.6 L6.2 4.4 L9.6 8 L7.6 8.2 A2.9 2.9 0 0 0 9.6 12.6 Z" fill="#fff"/></svg>
<svg class="abs" style="left:816px;top:578px;opacity:.5" width="20" height="22" viewBox="0 0 20 22"><path d="M1.6 1.2 L12.6 1.8 L12.6 19.5 L1.4 19 Z" fill="#eef4f6" stroke="#a4bcc8" stroke-width=".9"/><path d="M1.6 1.4 L12.6 2 L12.6 4.4 L1.6 3.8z" fill="#86c8ec"/><path d="M1.5 17 L12.5 17.4 L12.5 19.4 L1.5 19z" fill="#a8dca8"/><path d="M5 5 L5 17 M5 8 L12 8.3" stroke="#c4d0d8" stroke-width=".9"/><circle cx="12.4" cy="16.4" r="4.6" fill="#9cd49c" stroke="#86b486" stroke-width=".8"/><path d="M10.2 16.4 a2.2 2.2 0 1 1 2.2 2.2" fill="none" stroke="#fff" stroke-width="1.4"/></svg>
<svg class="abs" style="left:844px;top:581px" width="22" height="19" viewBox="0 0 22 19"><defs><linearGradient id="ga" x1="0" y1="0" x2="1" y2="1"><stop offset="0" stop-color="#46d24e"/><stop offset="1" stop-color="#0f8e1c"/></linearGradient></defs><path d="M4.2 1.2 L21 1 L19.5 15.6 L1 16.7 Z" fill="#fafbfc" stroke="#94a0aa" stroke-width=".8"/><path d="M21 1 L19.5 15.6" stroke="#5a6874" stroke-width="1.5"/><path d="M19.8 15.7 L1 16.8" stroke="#4e5a66" stroke-width="1.7"/><path d="M2.6 9 L20.2 8.4" stroke="#a4aab2" stroke-width="1"/><path d="M12.5 2 L16.7 6.8 L14.4 6.8 L14.4 10.4 L16.7 10.4 L12.5 14.8 L8.3 10.4 L10.6 10.4 L10.6 6.8 L8.3 6.8 Z" fill="url(#ga)" stroke="#18982a" stroke-width=".5"/></svg>
<div class="dd" style="left:877px;top:590px;border-left-width:3.5px;border-right-width:3.5px;border-top:3.5px solid #8290a4;filter:drop-shadow(0 1px 0 #fff)"></div>
</body>
</html>
